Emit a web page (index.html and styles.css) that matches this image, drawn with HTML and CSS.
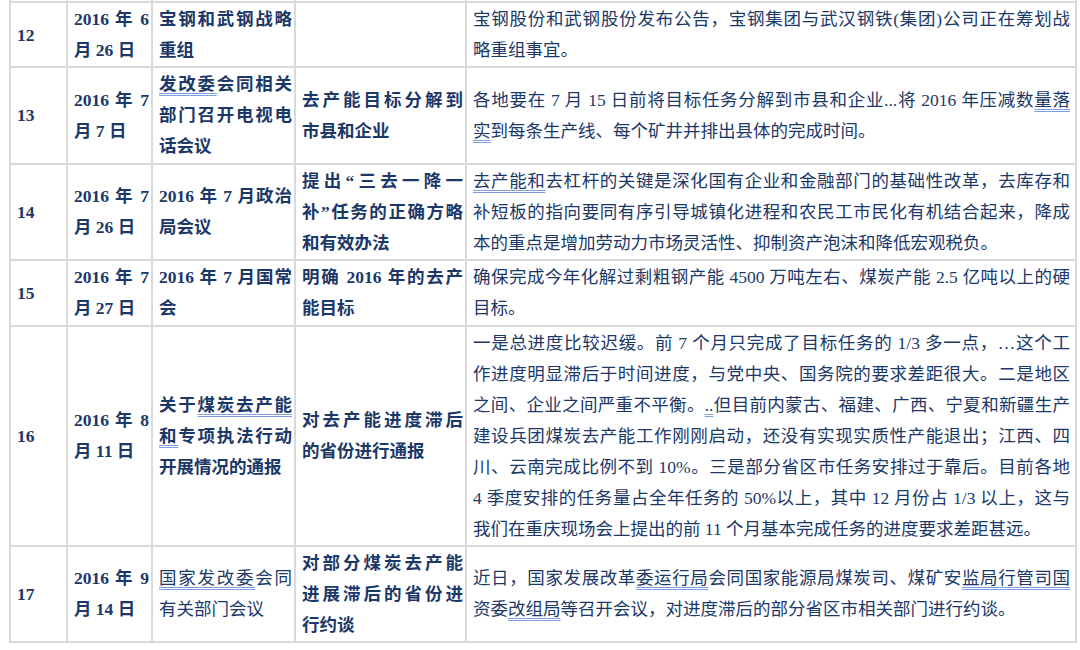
FILE: index.html
```html
<!DOCTYPE html>
<html lang="zh-CN">
<head>
<meta charset="utf-8">
<title>去产能政策时间表</title>
<link rel="stylesheet" href="styles.css">
</head>
<body>
<div class="sheet">
<table class="grid">
  <colgroup>
    <col class="c-no"><col class="c-date"><col class="c-event"><col class="c-topic"><col class="c-text">
  </colgroup>
  <tbody>
    <tr class="cut"><td></td><td></td><td></td><td></td><td></td></tr>
    <tr>
      <td class="no">12</td>
      <td class="b j"><span>2016 年 6</span><span>月 26 日</span></td>
      <td class="b j"><span>宝钢和武钢战略</span><span>重组</span></td>
      <td class="b j"></td>
      <td class="j"><span>宝钢股份和武钢股份发布公告，宝钢集团与武汉钢铁(集团)公司正在筹划战</span><span>略重组事宜。</span></td>
    </tr>
    <tr>
      <td class="no">13</td>
      <td class="b j"><span>2016 年 7</span><span>月 7 日</span></td>
      <td class="b j"><span><u>发改委</u>会同相关</span><span>部门召开电视电</span><span>话会议</span></td>
      <td class="b j"><span>去产能目标分解到</span><span>市县和企业</span></td>
      <td class="j"><span>各地要在 7 月 15 日前将目标任务分解到市县和企业...将 2016 年压减数<u>量落</u></span><span><u>实</u>到每条生产线、每个矿井并排出县体的完成时间。</span></td>
    </tr>
    <tr>
      <td class="no">14</td>
      <td class="b j"><span>2016 年 7</span><span>月 26 日</span></td>
      <td class="b j"><span>2016 年 7 月政治</span><span>局会议</span></td>
      <td class="b j"><span>提出“三去一降一</span><span>补”任务的正确方略</span><span>和有效办法</span></td>
      <td class="j"><span><u>去产能和</u>去杠杆的关键是深化国有企业和金融部门的基础性改革，去库存和</span><span>补短板的指向要同有序引导城镇化进程和农民工市民化有机结合起来，降成</span><span>本的重点是增加劳动力市场灵活性、抑制资产泡沫和降低宏观税负。</span></td>
    </tr>
    <tr>
      <td class="no">15</td>
      <td class="b j"><span>2016 年 7</span><span>月 27 日</span></td>
      <td class="b j"><span>2016 年 7 月国常</span><span>会</span></td>
      <td class="b j"><span>明确 2016 年的去产</span><span>能目标</span></td>
      <td class="j"><span>确保完成今年化解过剩粗钢产能 4500 万吨左右、煤炭产能 2.5 亿吨以上的硬</span><span>目标。</span></td>
    </tr>
    <tr>
      <td class="no">16</td>
      <td class="b j"><span>2016 年 8</span><span>月 11 日</span></td>
      <td class="b j"><span>关于<u>煤炭去产能</u></span><span><u>和</u>专项执法行动</span><span>开展情况的通报</span></td>
      <td class="b j"><span>对去产能进度滞后</span><span>的省份进行通报</span></td>
      <td class="j"><span>一是总进度比较迟缓。前 7 个月只完成了目标任务的 1/3 多一点，…这个工</span><span>作进度明显滞后于时间进度，与党中央、国务院的要求差距很大。二是地区</span><span>之间、企业之间严重不平衡。<u>..</u>但目前内蒙古、福建、广西、宁夏和新疆生产</span><span>建设兵团煤炭去产能工作刚刚启动，还没有实现实质性产能退出；江西、四</span><span>川、云南完成比例不到 10%。三是部分省区市任务安排过于靠后。目前各地</span><span>4 季度安排的任务量占全年任务的 50%以上，其中 12 月份占 1/3 以上，这与</span><span>我们在重庆现场会上提出的前 11 个月基本完成任务的进度要求差距甚远。</span></td>
    </tr>
    <tr>
      <td class="no">17</td>
      <td class="b j"><span>2016 年 9</span><span>月 14 日</span></td>
      <td class="j"><span><u>国家发改委</u>会同</span><span>有关部门会议</span></td>
      <td class="b j"><span>对部分煤炭去产能</span><span>进展滞后的省份进</span><span>行约谈</span></td>
      <td class="j"><span>近日，国家发展改革<u>委运行局</u>会同国家能源局煤炭司、煤矿安<u>监局行管司国</u></span><span>资委<u>改组局</u>等召开会议，对进度滞后的部分省区市相关部门进行约谈。</span></td>
    </tr>
  </tbody>
</table>
</div>
</body>
</html>
```

FILE: styles.css
```css
html, body {
  margin: 0;
  padding: 0;
  background: #ffffff;
}

.sheet {
  padding: 0 0 0 9px;
}

.grid {
  table-layout: fixed;
  border-collapse: collapse;
  width: 1066px;
  font-family: "Liberation Serif", "Noto Sans CJK SC", serif;
  font-size: 17.5px;
  line-height: 31px;
  color: #1b3868;
}

.c-no { width: 57px; }
.c-date { width: 85px; }
.c-event { width: 143px; }
.c-topic { width: 171px; }
.c-text { width: 610px; }

.grid td {
  border: 2px solid #d9d9d9;
  padding: 1px 2px 0.4px 6px;
  vertical-align: middle;
}

.grid td:last-child {
  padding-right: 5px;
}

.grid .cut td {
  border-top: none;
  height: 1px;
  padding: 0;
}

.no {
  font-weight: bold;
}

.b {
  font-weight: bold;
}

.j > span {
  display: block;
  text-align: justify;
  text-align-last: justify;
}

.j > span:last-child {
  text-align-last: left;
}

u {
  text-decoration-line: underline;
  text-decoration-style: double;
  text-decoration-color: #7f9fe2;
  text-decoration-thickness: 1px;
  text-underline-offset: 3px;
}
```
